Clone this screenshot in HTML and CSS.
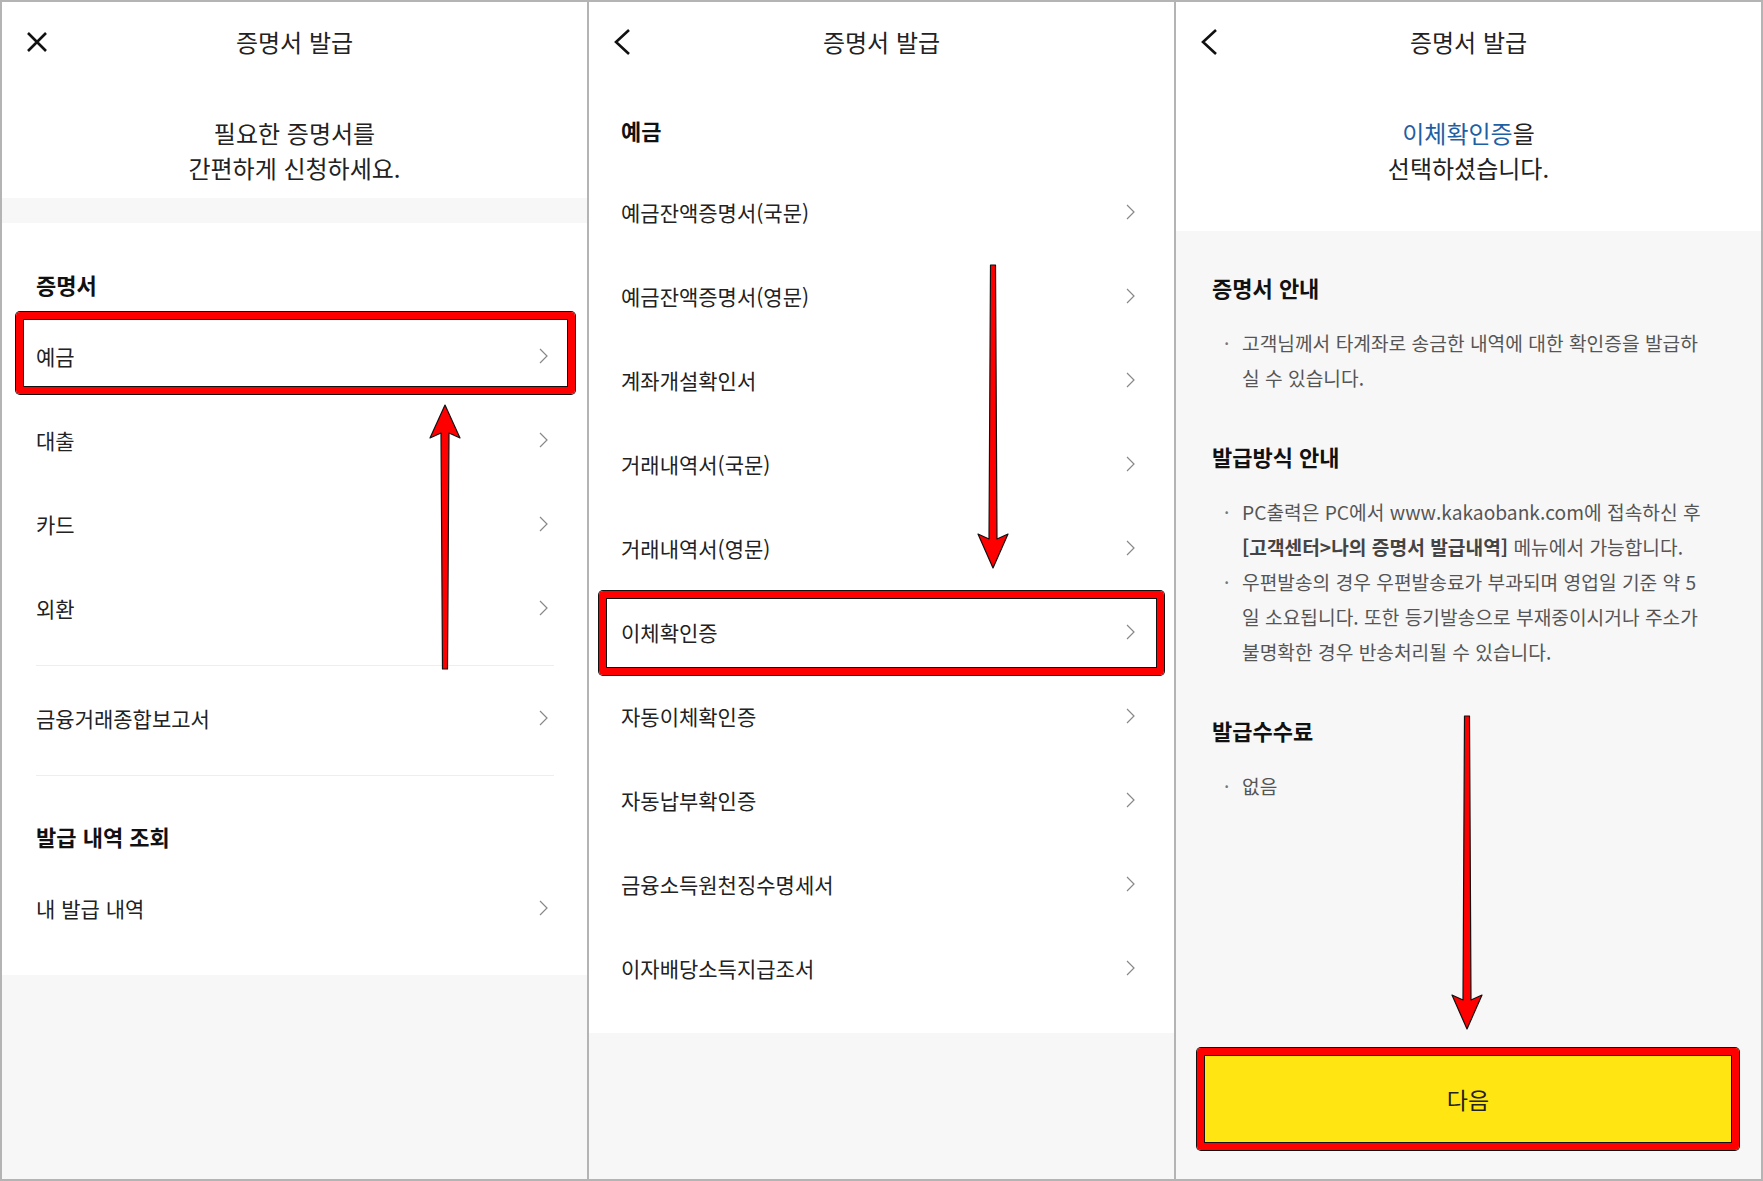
FILE: index.html
```html
<!DOCTYPE html>
<html lang="ko">
<head>
    <meta charset="UTF-8">
    <meta name="viewport" content="width=device-width, initial-scale=1.0">
    <title>증명서 발급</title>
    <link rel="stylesheet" href="styles.css">
</head>
<body>
    <div class="board">

        <!-- 1. 증명서 선택 -->
        <section class="screen">
            <header class="appbar">
                <button class="appbar-btn" aria-label="닫기">
                    <svg width="22" height="22" viewBox="0 0 22 22"><path d="M2 2 L20 20 M20 2 L2 20" /></svg>
                </button>
                <h1 class="appbar-title">증명서 발급</h1>
            </header>

            <div class="intro intro-tight">
                <p>필요한 증명서를<br>간편하게 신청하세요.</p>
            </div>

            <div class="band"></div>

            <div class="menu">
                <div class="group group-first">
                    <h2 class="group-title">증명서</h2>
                    <ul class="list">
                        <li class="row is-marked">예금<span class="chev"></span></li>
                        <li class="row">대출<span class="chev"></span></li>
                        <li class="row">카드<span class="chev"></span></li>
                        <li class="row">외환<span class="chev"></span></li>
                    </ul>
                </div>
                <div class="group group-single">
                    <ul class="list">
                        <li class="row">금융거래종합보고서<span class="chev"></span></li>
                    </ul>
                </div>
                <div class="group group-last">
                    <h2 class="group-title">발급 내역 조회</h2>
                    <ul class="list">
                        <li class="row">내 발급 내역<span class="chev"></span></li>
                    </ul>
                </div>
            </div>

            <svg class="arrow arrow-up" width="34" height="266" viewBox="0 0 34 266">
                <polygon points="17,1 32,34 21,29 19.5,265 14.5,265 13,29 2,34" />
            </svg>
        </section>

        <!-- 2. 예금 증명서 목록 -->
        <section class="screen">
            <header class="appbar">
                <button class="appbar-btn" aria-label="뒤로">
                    <svg width="18" height="28" viewBox="0 0 18 28"><path d="M16 2 L3 14 L16 26" /></svg>
                </button>
                <h1 class="appbar-title">증명서 발급</h1>
            </header>

            <div class="menu menu-wide">
                <h2 class="group-title">예금</h2>
                <ul class="list">
                    <li class="row">예금잔액증명서(국문)<span class="chev"></span></li>
                    <li class="row">예금잔액증명서(영문)<span class="chev"></span></li>
                    <li class="row">계좌개설확인서<span class="chev"></span></li>
                    <li class="row">거래내역서(국문)<span class="chev"></span></li>
                    <li class="row">거래내역서(영문)<span class="chev"></span></li>
                    <li class="row is-marked">이체확인증<span class="chev"></span></li>
                    <li class="row">자동이체확인증<span class="chev"></span></li>
                    <li class="row">자동납부확인증<span class="chev"></span></li>
                    <li class="row">금융소득원천징수명세서<span class="chev"></span></li>
                    <li class="row">이자배당소득지급조서<span class="chev"></span></li>
                </ul>
            </div>

            <svg class="arrow arrow-down" width="34" height="305" viewBox="0 0 34 305">
                <polygon points="14.5,1 19.5,1 21,275 32,270 17,304 2,270 13,275" />
            </svg>
        </section>

        <!-- 3. 이체확인증 안내 -->
        <section class="screen">
            <header class="appbar">
                <button class="appbar-btn" aria-label="뒤로">
                    <svg width="18" height="28" viewBox="0 0 18 28"><path d="M16 2 L3 14 L16 26" /></svg>
                </button>
                <h1 class="appbar-title">증명서 발급</h1>
            </header>

            <div class="intro">
                <p><span class="picked">이체확인증</span>을<br>선택하셨습니다.</p>
            </div>

            <div class="notice">
                <h2 class="group-title">증명서 안내</h2>
                <ul class="bullets">
                    <li><span>고객님께서 타계좌로 송금한 내역에 대한 확인증을 발급하실 수 있습니다.</span></li>
                </ul>

                <h2 class="group-title">발급방식 안내</h2>
                <ul class="bullets">
                    <li><span>PC출력은 PC에서 www.kakaobank.com에 접속하신 후 <b>[고객센터&gt;나의 증명서 발급내역]</b> 메뉴에서 가능합니다.</span></li>
                    <li><span>우편발송의 경우 우편발송료가 부과되며 영업일 기준 약 5일 소요됩니다. 또한 등기발송으로 부재중이시거나 주소가 불명확한 경우 반송처리될 수 있습니다.</span></li>
                </ul>

                <h2 class="group-title">발급수수료</h2>
                <ul class="bullets">
                    <li><span>없음</span></li>
                </ul>

                <button class="next-btn">다음</button>
            </div>

            <svg class="arrow arrow-next" width="34" height="315" viewBox="0 0 34 315">
                <polygon points="14.5,1 19.5,1 21,285 32,280 17,314 2,280 13,285" />
            </svg>
        </section>

    </div>
</body>
</html>
```

FILE: styles.css
```css
* {
    box-sizing: border-box;
}

body {
    margin: 0;
    padding: 0;
    font-family: "Noto Sans CJK KR", "Noto Sans", sans-serif;
    color: #222;
    background-color: #b4b4b4;
}

.board {
    display: flex;
    gap: 2px;
    width: 1763px;
    height: 1181px;
    border: 2px solid #b4b4b4;
    background-color: #b4b4b4;
}

.screen {
    position: relative;
    flex: 1;
    display: flex;
    flex-direction: column;
    background-color: #f7f7f7;
    overflow: hidden;
}

.screen > * {
    flex-shrink: 0;
}

/* app bar */
.appbar {
    display: grid;
    grid-template-columns: 1fr auto 1fr;
    align-items: center;
    height: 80px;
    padding: 0 24px;
    background-color: #fff;
}

.appbar-btn {
    justify-self: start;
    display: flex;
    padding: 0;
    border: none;
    background: none;
}

.appbar-btn svg path {
    fill: none;
    stroke: #111;
    stroke-width: 2.6;
}

.appbar-title {
    margin: 0;
    font-size: 24px;
    font-weight: 400;
    line-height: 30px;
    color: #222;
}

/* intro text */
.intro {
    padding: 33px 0 46px;
    background-color: #fff;
    text-align: center;
}

.intro-tight {
    padding-bottom: 13px;
}

.intro p {
    margin: 0;
    font-size: 24px;
    line-height: 35px;
}

.picked {
    color: #1f5fa3;
}

.band {
    height: 25px;
}

/* menu lists */
.menu {
    background-color: #fff;
}

.group {
    padding: 45px 33px 15px 34px;
}

.group-first {
    padding-top: 46px;
}

.group-single {
    padding-top: 10px;
}

.group-first .list,
.group-single .list {
    border-bottom: 1px solid #eee;
    padding-bottom: 15px;
    margin-bottom: -15px;
}

.group-last {
    padding-bottom: 25px;
}

.group-title {
    margin: 0 0 15px;
    font-size: 22px;
    font-weight: 700;
    line-height: 30px;
    color: #111;
}

.list {
    margin: 0;
    padding: 0;
    list-style: none;
}

.row {
    position: relative;
    display: flex;
    align-items: center;
    justify-content: space-between;
    height: 84px;
    font-size: 21px;
    color: #222;
}

.chev {
    width: 9px;
    height: 16px;
    margin-right: 6px;
    background: no-repeat center / 9px 16px;
    background-image: url("data:image/svg+xml,%3Csvg xmlns='http://www.w3.org/2000/svg' viewBox='0 0 9 16'%3E%3Cpath d='M1 1 L8 8 L1 15' fill='none' stroke='%23888' stroke-width='1.2'/%3E%3C/svg%3E");
}

.menu-wide {
    padding: 33px 39px 23px 32px;
}

.menu-wide .group-title {
    margin-bottom: 25px;
}

.menu-wide .chev {
    margin-right: 0;
}

/* red highlight marks */
.row.is-marked::after,
.next-btn::after {
    content: "";
    position: absolute;
    border: 7px solid #ff0000;
    border-radius: 4px;
    box-shadow: 0 0 0 1px #111, inset 0 0 0 1px #111;
    pointer-events: none;
}

.group .row.is-marked::after {
    top: -2px;
    bottom: 4px;
    left: -20px;
    right: -21px;
}

.menu-wide .row.is-marked::after {
    top: 1px;
    bottom: -1px;
    left: -22px;
    right: -29px;
}

/* notice */
.notice {
    flex: 1;
    flex-shrink: 1;
    display: flex;
    flex-direction: column;
    padding: 41px 52px 0 36px;
}

.notice .group-title {
    margin: 0;
}

.bullets {
    margin: 24px 0 45px;
    padding: 0 0 0 12px;
    list-style: none;
    font-size: 19.2px;
    line-height: 35px;
    color: #555;
}

.bullets li {
    display: grid;
    grid-template-columns: 18px 1fr;
}

.bullets li::before {
    content: "·";
    color: #777;
}

.bullets b {
    font-weight: 700;
    color: #444;
}

.next-btn {
    position: relative;
    flex-shrink: 0;
    margin: auto -30px 29px -15px;
    height: 102px;
    border: none;
    border-radius: 4px;
    background-color: #ffe512;
    font-family: inherit;
    font-size: 23px;
    color: #222;
}

.next-btn::after {
    inset: 0;
}

/* annotation arrows */
.arrow {
    position: absolute;
}

.arrow polygon {
    fill: #ff0000;
    stroke: #111;
    stroke-width: 1.2;
    stroke-linejoin: round;
}

.arrow-up {
    left: 426px;
    top: 402px;
}

.arrow-down {
    left: 387px;
    top: 262px;
}

.arrow-next {
    left: 274px;
    top: 713px;
}
```
